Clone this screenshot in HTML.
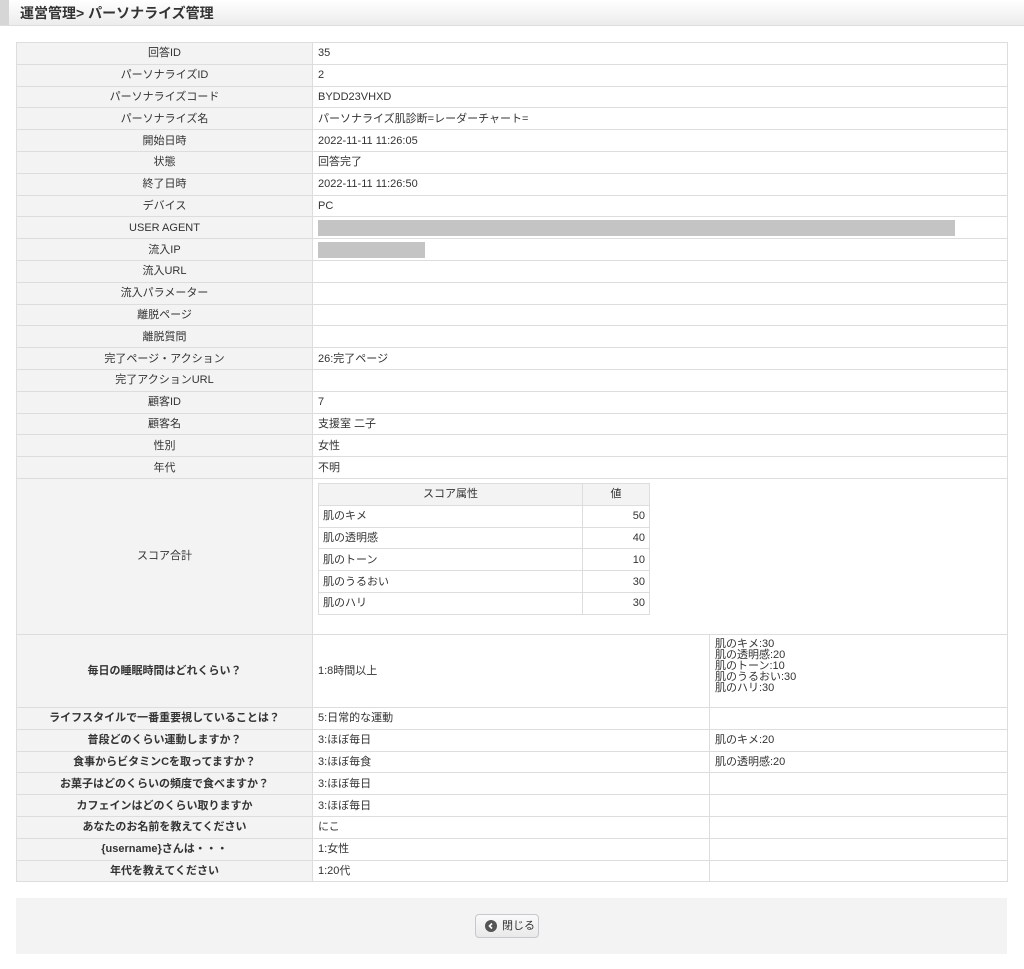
<!DOCTYPE html>
<html><head><meta charset="utf-8"><style>
body{margin:0;background:#fff;font-family:"Liberation Sans","Noto Sans CJK JP",sans-serif;font-size:11px;color:#333;}
.hd{position:absolute;left:0;top:0;width:1024px;height:25px;background:linear-gradient(#fff,#ececec);border-bottom:1px solid #ddd;}
.hd .bar{position:absolute;left:0;top:0;width:9px;height:25px;background:#d6d6d6;}
.hd .t{position:absolute;left:20px;top:3px;font-size:14px;font-weight:bold;color:#333;}
table.m{position:absolute;left:16px;top:42px;width:991px;border-collapse:collapse;table-layout:fixed;}
table.m tr{height:21.8px;}
table.m td{border:1px solid #ddd;padding:0 5px;vertical-align:middle;line-height:12px;}
table.m td.l{background:#f3f3f3;text-align:center;}
table.m td.b{font-weight:bold;}
.g{background:#c4c4c4;height:16px;}
table.s{border-collapse:collapse;width:331px;table-layout:fixed;margin:4px 0 0 0;}
table.s tr{height:21.8px;}
table.s td{border:1px solid #ddd;padding:0 4px;}
table.s th{border:1px solid #ddd;background:#f3f3f3;font-weight:normal;}
.ft{position:absolute;left:16px;top:898px;width:991px;height:56px;background:#f3f3f3;}
.btn{position:absolute;left:459px;top:16px;width:62px;height:22px;border:1px solid #c8c8cc;border-radius:4px;background:linear-gradient(#fafafa,#e9e9e9);font-size:11px;line-height:22px;}
.btn svg{position:absolute;left:9px;top:5px;}
.btn span{position:absolute;left:26px;}
</style></head><body>
<div class="hd"><div class="bar"></div><div class="t">運営管理&gt; パーソナライズ管理</div></div>
<table class="m">
<col style="width:296px"><col style="width:397px"><col style="width:298px">
<tr><td class="l">回答ID</td><td colspan="2">35</td></tr>
<tr><td class="l">パーソナライズID</td><td colspan="2">2</td></tr>
<tr><td class="l">パーソナライズコード</td><td colspan="2">BYDD23VHXD</td></tr>
<tr><td class="l">パーソナライズ名</td><td colspan="2">パーソナライズ肌診断=レーダーチャート=</td></tr>
<tr><td class="l">開始日時</td><td colspan="2">2022-11-11 11:26:05</td></tr>
<tr><td class="l">状態</td><td colspan="2">回答完了</td></tr>
<tr><td class="l">終了日時</td><td colspan="2">2022-11-11 11:26:50</td></tr>
<tr><td class="l">デバイス</td><td colspan="2">PC</td></tr>
<tr><td class="l">USER AGENT</td><td colspan="2"><div class="g" style="width:637px"></div></td></tr>
<tr><td class="l">流入IP</td><td colspan="2"><div class="g" style="width:107px"></div></td></tr>
<tr><td class="l">流入URL</td><td colspan="2"></td></tr>
<tr><td class="l">流入パラメーター</td><td colspan="2"></td></tr>
<tr><td class="l">離脱ページ</td><td colspan="2"></td></tr>
<tr><td class="l">離脱質問</td><td colspan="2"></td></tr>
<tr><td class="l">完了ページ・アクション</td><td colspan="2">26:完了ページ</td></tr>
<tr><td class="l">完了アクションURL</td><td colspan="2"></td></tr>
<tr><td class="l">顧客ID</td><td colspan="2">7</td></tr>
<tr><td class="l">顧客名</td><td colspan="2">支援室 二子</td></tr>
<tr><td class="l">性別</td><td colspan="2">女性</td></tr>
<tr><td class="l">年代</td><td colspan="2">不明</td></tr>
<tr style="height:156px"><td class="l">スコア合計</td><td colspan="2" style="vertical-align:top">
<table class="s"><col style="width:264px"><col style="width:67px">
<tr><th>スコア属性</th><th>値</th></tr>
<tr><td>肌のキメ</td><td style="text-align:right">50</td></tr>
<tr><td>肌の透明感</td><td style="text-align:right">40</td></tr>
<tr><td>肌のトーン</td><td style="text-align:right">10</td></tr>
<tr><td>肌のうるおい</td><td style="text-align:right">30</td></tr>
<tr><td>肌のハリ</td><td style="text-align:right">30</td></tr>
</table></td></tr>
<tr style="height:73px"><td class="l b">毎日の睡眠時間はどれくらい？</td><td>1:8時間以上</td><td style="vertical-align:top;padding-top:4px;line-height:11px">肌のキメ:30<br>肌の透明感:20<br>肌のトーン:10<br>肌のうるおい:30<br>肌のハリ:30</td></tr>
<tr><td class="l b">ライフスタイルで一番重要視していることは？</td><td>5:日常的な運動</td><td></td></tr>
<tr><td class="l b">普段どのくらい運動しますか？</td><td>3:ほぼ毎日</td><td>肌のキメ:20</td></tr>
<tr><td class="l b">食事からビタミンCを取ってますか？</td><td>3:ほぼ毎食</td><td>肌の透明感:20</td></tr>
<tr><td class="l b">お菓子はどのくらいの頻度で食べますか？</td><td>3:ほぼ毎日</td><td></td></tr>
<tr><td class="l b">カフェインはどのくらい取りますか</td><td>3:ほぼ毎日</td><td></td></tr>
<tr><td class="l b">あなたのお名前を教えてください</td><td>にこ</td><td></td></tr>
<tr><td class="l b">{username}さんは・・・</td><td>1:女性</td><td></td></tr>
<tr><td class="l b">年代を教えてください</td><td>1:20代</td><td></td></tr>
</table>
<div class="ft"><div class="btn"><svg width="12" height="12" viewBox="0 0 12 12"><circle cx="6" cy="6" r="6" fill="#555"/><path d="M7 3.5L4.5 6L7 8.5" stroke="#fff" stroke-width="1.6" fill="none"/></svg><span>閉じる</span></div></div>
</body></html>
